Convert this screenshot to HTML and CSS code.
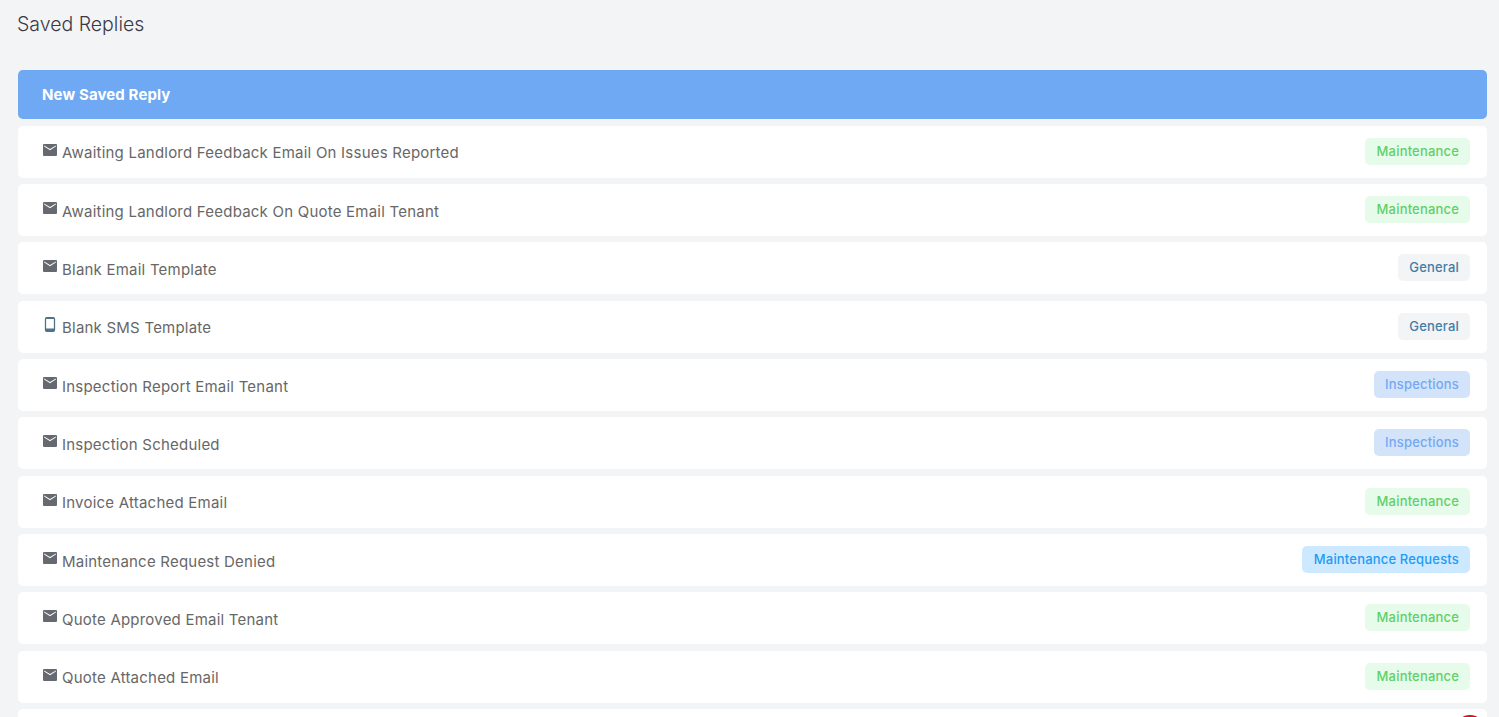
FILE: index.html
```html
<!DOCTYPE html>
<html lang="en">
<head>
<meta charset="utf-8">
<title>Saved Replies</title>
<link rel="stylesheet" href="styles.css">
</head>
<body>
<svg class="defs" width="0" height="0" aria-hidden="true">
  <symbol id="mail" viewBox="0 0 14 12"><path fill-rule="evenodd" d="M1 0h12a1 1 0 0 1 1 1v10a1 1 0 0 1-1 1H1a1 1 0 0 1-1-1V1a1 1 0 0 1 1-1zM1.2 2.4 7 6.2l5.8-3.8v-1L7 4.9 1.2 1.400z"/></symbol>
  <symbol id="phone" viewBox="0 0 10 14"><path fill-rule="evenodd" d="M2 0h6a1.800 1.800 0 0 1 1.800 1.800v10.400A1.800 1.800 0 0 1 8 14H2a1.800 1.800 0 0 1-1.800-1.800V1.800A1.800 1.800 0 0 1 2 0zM1.400 1.800v9h7.200v-9z"/></symbol>
</svg>
<main class="page">
  <h1 class="title">Saved Replies</h1>
  <div class="list">
    <div class="new-reply">New Saved Reply</div>
    <div class="row"><div class="name"><svg class="ico"><use href="#mail"/></svg><span>Awaiting Landlord Feedback Email On Issues Reported</span></div><span class="tag green">Maintenance</span></div>
    <div class="row"><div class="name"><svg class="ico"><use href="#mail"/></svg><span>Awaiting Landlord Feedback On Quote Email Tenant</span></div><span class="tag green">Maintenance</span></div>
    <div class="row"><div class="name"><svg class="ico"><use href="#mail"/></svg><span>Blank Email Template</span></div><span class="tag grey">General</span></div>
    <div class="row"><div class="name"><svg class="ico ico-phone"><use href="#phone"/></svg><span>Blank SMS Template</span></div><span class="tag grey">General</span></div>
    <div class="row"><div class="name"><svg class="ico"><use href="#mail"/></svg><span>Inspection Report Email Tenant</span></div><span class="tag indigo">Inspections</span></div>
    <div class="row"><div class="name"><svg class="ico"><use href="#mail"/></svg><span>Inspection Scheduled</span></div><span class="tag indigo">Inspections</span></div>
    <div class="row"><div class="name"><svg class="ico"><use href="#mail"/></svg><span>Invoice Attached Email</span></div><span class="tag green">Maintenance</span></div>
    <div class="row"><div class="name"><svg class="ico"><use href="#mail"/></svg><span>Maintenance Request Denied</span></div><span class="tag blue">Maintenance Requests</span></div>
    <div class="row"><div class="name"><svg class="ico"><use href="#mail"/></svg><span>Quote Approved Email Tenant</span></div><span class="tag green">Maintenance</span></div>
    <div class="row"><div class="name"><svg class="ico"><use href="#mail"/></svg><span>Quote Attached Email</span></div><span class="tag green">Maintenance</span></div>
    <div class="row row-empty"></div>
  </div>
</main>
<div class="chat-bubble"></div>
</body>
</html>
```
FILE: styles.css
```css
* { box-sizing: border-box; }
html, body { height: 717px; overflow: hidden; }
body {
  margin: 0;
  background: #f3f4f6;
  font-family: "Inter", "Liberation Sans", sans-serif;
  color: #6b6b6b;
}
.defs { position: absolute; }
.page { height: 717px; overflow: hidden; padding: 12px 12px 0 18px; }
.title {
  margin: 0 0 34px -1px;
  font-size: 19.500px;
  line-height: 24px;
  font-weight: 300;
  color: #3a3a46;
}
.list { display: flex; flex-direction: column; gap: 6.330px; }
.new-reply {
  height: 49px;
  padding-left: 24px;
  display: flex;
  align-items: center;
  background: #6fa8f3;
  border-radius: 5px;
  color: #fff;
  font-size: 15px;
  letter-spacing: 0.120px;
  font-weight: 700;
  margin-bottom: 0.500px;
}
.row {
  height: 52px;
  padding: 0 17px 0 25px;
  display: flex;
  align-items: center;
  justify-content: space-between;
  background: #fff;
  border-radius: 5px;
}
.name {
  display: flex;
  align-items: center;
  gap: 5px;
  font-size: 15px;
  letter-spacing: 0.220px;
  line-height: 20px;
  color: #676767;
}
.name span { position: relative; top: 1.400px; }
.ico { width: 14px; height: 12px; fill: #666a70; margin-top: -4px; }
.ico-phone { height: 15px; fill: #4f7286; margin-top: -5px; }
.tag {
  height: 27px;
  margin-top: -1px;
  padding: 0 11px 1px 11.500px;
  display: inline-flex;
  align-items: center;
  border-radius: 5px;
  font-size: 13px;
  letter-spacing: 0.180px;
  font-weight: 500;
}
.green { background: #e7fbeb; color: #5fd068; }
.grey { background: #f3f4f6; color: #3f7ea6; }
.indigo { background: #d3e3fa; color: #74a9f2; }
.blue { background: #cce9ff; color: #1e9bf5; }
.chat-bubble {
  position: fixed;
  left: 1455px;
  top: 715px;
  width: 30px;
  height: 30px;
  border-radius: 50%;
  background: #d4122d;
}
```
